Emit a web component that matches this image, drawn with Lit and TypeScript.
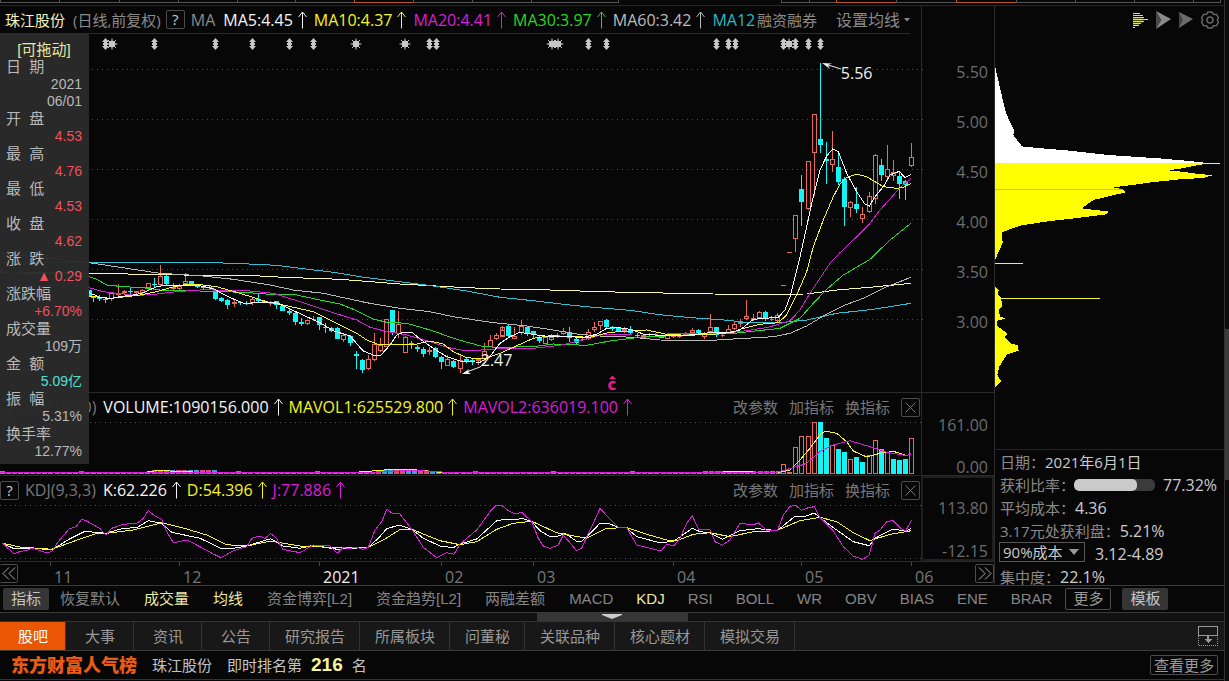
import { LitElement, html, svg, css } from "lit";
import { customElement, state } from "lit/decorators.js";

type Origin = [number, number];

// Every series is stored in segments: an origin in plot units, then samples in thirds of a unit.
const A: Origin = [0, 110];
const B: Origin = [200, 240];
const C: Origin = [500, 240];
const D: Origin = [740, 50];
const K1: Origin = [0, 460];
const K2: Origin = [400, 460];
const K3: Origin = [720, 395];
const P: Origin = [980, 50];

const place = (o: Origin, x: number, y: number) => `${(o[0] + x / 3).toFixed(1)},${(o[1] + y / 3).toFixed(1)}`;
const trace = (...segments: [Origin, string][]) =>
  segments
    .map(([o, s]) => s.split(" ").map((p) => { const [x, y] = p.split(",").map(Number); return place(o, x, y); }).join(" "))
    .join(" ");

const MA_LINES: [string, string][] = [
  ["#f8f8a8", trace([A, "0,486 268,490 600,496"], [B, "100,107 180,108 250,112 420,118 600,132 800,143"], [C, "0,147 150,150 300,155 440,158 640,162"], [D, "0,733 200,732 290,720 400,711 513,700"])],
  ["#2fc0d4", trace([A, "0,459 268,458 600,457"], [B, "100,70 230,76 300,85 400,97 480,110 600,125 700,138 800,153"], [C, "0,172 100,182 200,194 280,202 390,211 480,224 560,232 700,242"], [D, "0,818 120,818 200,810 290,790 400,778 513,760"])],
  ["#b8b8b8", trace([A, "0,430 268,458 380,475 480,490 600,497"], [B, "100,118 210,135 280,150 370,160 500,188 600,205 690,215 760,230 880,248"], [C, "0,250 80,258 160,270 230,282 300,288 400,292 480,300 600,303 700,297"], [D, "0,866 100,860 150,850 200,828 250,798 310,767 370,745 440,710 513,682"])],
  ["#24d824", trace([A, "0,485 200,495 268,500 290,508 320,525 370,530 430,533 480,540 600,543"], [B, "130,157 210,163 280,163 350,178 420,192 470,212 520,237 560,247 620,250 690,270 770,298 850,320"], [C, "0,322 100,320 160,312 260,316 330,303 420,292 560,285 700,280"], [D, "0,848 120,835 180,805 220,760 260,718 310,675 390,628 450,570 513,520"])],
  ["#d81ed8", trace([A, "0,480 200,515 268,533 310,545 350,550 420,556 470,552 530,545 600,540"], [B, "0,148 80,152 150,153 220,160 300,185 380,212 470,240 510,262 550,272 620,285 680,302 740,322 800,333"], [C, "0,326 100,325 180,316 250,300 310,283 400,282 500,282 640,280 720,275"], [D, "0,845 85,832 150,812 180,780 210,730 240,685 270,640 300,608 350,560 390,520 420,480 480,413 513,385"])],
  ["#f8f828", trace([A, "268,558 330,565 380,560 420,555 470,545 510,533 550,525 600,524"], [B, "50,140 120,160 200,185 250,195 340,215 400,245 470,280 500,300 540,315 600,312 650,312 690,303 730,312 760,335 800,353 850,357"], [C, "0,340 40,322 100,295 150,287 270,292 330,277 440,270 500,283 560,286 640,283 700,277"], [D, "0,838 60,823 115,818 140,795 170,735 200,665 220,590 250,510 280,440 300,402 320,382 350,373 380,380 430,410 470,415 490,412 513,400"])],
  ["#fafafa", trace([A, "268,548 300,562 330,566 360,560 400,555 430,548 470,530 500,525 540,527 600,527"], [B, "40,146 80,168 130,190 180,188 230,188 270,207 320,230 360,248 400,272 450,288 465,305 490,333 520,345 543,345 570,315 590,285 610,277 636,277 660,297 700,325 740,350 780,363 840,367 870,350"], [C, "0,310 30,290 60,277 110,285 150,290 200,290 250,292 290,283 320,265 350,262 390,268 430,282 500,288 560,286 620,279 690,277"], [D, "0,840 40,808 115,802 135,780 150,740 180,620 200,530 215,460 240,360 260,318 278,297 295,305 320,370 350,425 375,463 388,468 405,440 430,410 450,375 478,364 495,383 513,373"])],
];

// One candle: centre, high, body top, body bottom, low, u(p) or d(own).
const CANDLES: [Origin, string][] = [
  [A, "268 540 540 560 560 d|280 557 557 565 575 d|298 556 560 567 572 d|316 562 568 571 580 d|334 550 550 568 572 u|355 522 548 555 558 u|373 540 543 550 554 u|391 532 544 547 556 d|409 543 543 550 552 u|427 537 540 548 552 u|445 520 520 535 540 u|463 503 522 526 535 d|481 465 498 525 528 u|499 490 498 523 528 d|520 520 530 537 540 u|538 522 528 536 545 u|556 490 514 522 526 u|574 512 514 524 526 d|592 522 525 530 534 d"],
  [B, "10 137 137 143 148 d|28 138 140 143 150 d|46 150 150 177 180 d|64 170 174 182 185 d|82 178 181 194 206 d|103 180 186 193 200 u|121 182 187 190 194 d|139 184 188 191 194 d|157 172 178 190 196 u|175 158 176 183 186 d|193 180 183 187 190 d|212 184 188 191 198 u|230 184 184 195 207 d|247 196 198 212 214 d|268 208 212 218 224 d|286 216 218 245 255 d|304 235 247 251 258 d|322 240 240 252 255 u|340 228 236 241 244 u|358 230 232 255 270 d|376 250 260 264 278 d|394 262 265 273 276 d|412 260 265 297 298 d|430 278 285 300 306 u|451 285 288 310 318 d|469 332 341 349 388 d|487 358 361 390 398 d|505 345 358 386 390 u|523 280 312 360 362 u|541 295 316 332 335 u|559 238 238 320 322 u|577 210 210 275 285 d|595 212 253 282 295 u|616 288 292 338 340 u|634 302 310 316 326 d|652 314 322 326 335 d|670 322 327 342 350 d|688 322 329 336 344 u|706 320 323 350 353 d|724 348 352 366 386 d|742 345 356 377 378 u|760 360 362 380 384 d|781 342 360 388 398 u|799 350 356 366 368 d|817 356 360 364 376 d|835 354 358 362 374 u|853 308 332 358 362 u|871 285 300 320 322 u|889 280 284 298 300 u|907 258 270 288 290 u"],
  [C, "7 258 262 290 292 u|25 254 258 288 290 d|43 262 288 296 298 u|64 240 258 278 285 u|82 260 262 282 288 d|100 272 274 282 296 d|118 286 290 302 308 d|137 288 292 311 312 u|155 282 292 301 304 u|173 280 284 292 295 u|190 264 272 283 285 u|209 262 275 293 305 d|229 294 297 308 312 d|247 288 296 299 304 u|265 266 275 298 300 u|283 246 262 270 275 u|301 242 244 258 270 u|319 236 240 262 264 d|337 258 262 268 272 d|356 262 265 272 275 d|373 262 267 274 278 u|391 258 268 280 284 d|411 278 284 288 295 d|430 282 286 292 297 u|448 278 282 286 290 u|466 278 282 286 290 u|484 284 288 293 295 d|502 280 285 296 298 u|520 280 285 292 294 u|538 278 285 291 293 u|556 276 280 284 288 u|577 265 271 280 286 u|595 266 270 280 282 d|613 276 283 290 297 u|631 223 262 275 278 u|649 260 262 284 292 d|667 275 284 287 290 u|685 255 267 278 280 u|703 247 252 268 270 u"],
  [D, "1 808 814 822 832 u|19 750 798 808 811 u|40 792 804 811 814 u|58 784 786 805 808 u|76 782 786 808 812 d|94 798 806 811 812 u|112 790 796 813 816 u|130 705 705 707 707 u|148 606 606 608 608 u|166 496 496 568 605 u|184 375 418 455 527 d|205 332 332 478 480 u|223 193 193 310 438 u|241 40 268 284 308 d|260 277 328 334 402 d|277 243 328 346 367 u|295 305 352 395 405 d|313 380 388 472 527 d|331 452 455 475 500 u|349 412 462 478 490 d|367 470 493 506 518 u|388 427 438 487 490 u|406 312 314 448 462 u|424 328 345 374 392 d|442 285 358 380 392 u|460 330 366 378 392 u|478 366 378 403 446 d|496 390 394 406 450 d|515 279 322 349 350 u"],
];

const UP = "#e8695f";
const DOWN = "#14f4f4";

const drawCandles = () =>
  CANDLES.map(([o, rows]) =>
    rows.split("|").map((r) => {
      const p = r.split(" ");
      const x = Math.floor(o[0] + +p[0] / 3);
      const [hi, top, bottom, lo] = p.slice(1, 5).map((v) => Math.round(o[1] + +v / 3));
      const h = Math.max(1, bottom - top);
      if (p[5] === "u" && +p[3] - +p[2] < 3) return svg`<path d="M${x - 2} ${top + 0.5}h5" stroke=${UP} />`;
      return p[5] === "u"
        ? svg`<path d="M${x + 0.5} ${hi}V${top}M${x + 0.5} ${bottom}V${lo}" stroke=${UP} /><path d="M${x - 1.5} ${top + 0.5}h4v${Math.max(0, h - 1)}h-4z" fill="none" stroke=${UP} />`
        : svg`<path d="M${x + 0.5} ${hi}V${lo}" stroke=${DOWN} /><rect x=${x - 2} y=${top} width="5" height=${h} fill=${DOWN} />`;
    })
  );

const VOLUMES =
  "190 208 u|208 230 u|226 156 u|244 124 u|265 124 u|283 82 u|301 82 d|319 130 d|337 150 u|355 162 d|373 171 d|391 193 u|409 186 d|427 201 d|448 180 u|466 136 u|484 163 d|502 170 u|520 192 d|538 195 d|556 192 d|574 130 u";

const QUIET_VOLUME = Array.from({ length: 129 }, (_, i) => {
  const x = i * 6.06;
  const busy = (x > 150 && x < 215) || (x > 370 && x < 430) ? 2 : x > 700 || (i * 7) % 13 === 0 ? 1 : 0;
  return { x: Math.round(x), h: 2 + busy, up: (i * 5 + Math.floor(i / 4)) % 3 !== 0 };
});

const MAVOL = [
  ["#f8f828", trace([K1, "0,38 440,36 480,31 540,35 660,38 1050,38 1180,28 1198,28"], [K2, "40,29 120,37 700,39 900,38"], [K3, "0,231 60,229 100,231 180,231 210,226 240,195 270,160 300,120 315,108 350,115 380,140 400,168 440,186 480,175 520,169 555,180"])],
  ["#d81ed8", trace([K1, "0,39 1100,38 1198,33"], [K2, "60,32 160,38 900,39"], [K3, "0,231 170,232 220,218 260,205 300,170 340,150 390,137 450,155 500,172 560,182 574,176"])],
];

const KDJ = [
  ["#fafafa", trace([K1, "8,250 42,266 97,264 155,270 207,238 255,214 318,220 370,205 410,203 445,182 485,190 515,217 600,235 663,265 700,265 740,258 812,236 850,258 900,265 940,256 1012,268 1105,262 1135,235 1160,206 1198,195"], [K2, "35,208 70,235 125,260 162,262 180,252 230,237 290,182 315,178 345,180 365,175 395,185 420,212 450,230 475,228 495,220 530,244 545,244 560,230 600,190 625,190 655,202 680,204 710,230 783,249 822,243 877,205 900,215 930,218 967,238 1020,212 1075,206 1133,212"], [K3, "174,405 226,363 250,366 283,354 300,368 350,405 400,440 448,452 465,430 518,402 557,408 574,400"])],
  ["#f8f828", trace([K1, "8,250 60,261 155,268 240,237 290,220 320,220 400,210 485,188 560,207 620,225 680,254 740,258 812,243 900,258 1012,263 1105,262 1150,240 1198,210"], [K2, "35,208 120,242 180,254 230,245 290,208 340,190 395,184 470,218 560,235 620,205 680,203 740,223 800,240 830,242 880,223 930,218 990,230 1060,215 1133,212"], [K3, "174,405 240,377 300,367 350,380 400,413 450,437 510,418 574,407"])],
  ["#d81ed8", trace([K1, "8,250 42,282 60,274 80,272 97,264 137,278 155,275 175,245 207,207 228,200 245,178 262,184 300,206 318,225 335,205 370,193 410,190 430,175 445,152 465,168 485,178 500,215 520,248 560,240 600,260 640,282 663,293 700,272 740,260 755,235 780,228 795,235 812,221 830,235 848,268 900,278 940,255 990,258 1012,279 1030,262 1045,266 1070,262 1090,268 1105,262 1125,210 1145,185 1160,148 1180,162 1198,160"], [K2, "35,208 70,262 110,293 140,278 162,283 180,252 230,210 270,155 288,136 305,136 325,152 345,162 365,157 395,185 415,235 430,258 450,265 475,255 490,225 530,272 545,265 560,230 580,190 600,145 625,172 655,202 680,203 710,255 740,262 783,273 800,253 822,257 840,235 860,190 877,167 895,207 930,210 945,245 967,256 990,240 1020,190 1060,195 1075,188 1100,212 1133,210"], [K3, "174,403 190,360 208,336 226,330 244,346 265,338 283,335 300,368 340,408 370,455 400,483 427,493 448,480 465,415 480,405 500,380 518,376 540,398 557,408 574,376"])],
];

const CHIPS_LOSS = trace([P, "45,48 58,105 78,190 102,240 100,255 125,288 130,290 270,302 385,315 535,325 630,333 680,339 45,339"]);
const CHIPS_GAIN = trace([P, "45,339 690,339 640,348 600,356 563,361 605,365 640,370 698,376 670,384 600,388 515,397 480,402 400,412 430,418 438,427 390,438 340,450 305,475 388,485 380,493 300,503 195,515 120,527 65,547 68,578 45,630"]);
const CHIPS_LOW = trace([P, "45,710 56,720 54,735 64,745 66,770 56,778 60,800 78,805 52,812 52,828 84,852 74,860 92,880 113,886 116,902 80,914 58,950 52,975 63,993 45,1014"]);

const STARS = [112, 356, 405, 552, 558, 789];
const SPLITS = [105, 154, 215, 252, 289, 313, 429, 436, 588, 606, 716, 728, 735, 783, 795, 808, 820];

const TOP_CELLS: [number, string][] = [
  [59, ""], [60, ""], [59, ""], [59, ""], [59, ""], [59, ""], [59, "hot"], [59, ""], [59, ""], [88, "last"],
  [164, "void"], [27, ""], [27, ""], [60, "hot"], [60, ""], [60, "hot"], [59, ""], [59, ""], [59, ""], [27, "last"], [2, "void"],
];

const MONTHS: [string, number][] = [["11", 129], ["12", 140], ["2021", 122], ["02", 92], ["03", 140], ["04", 128], ["05", 110], ["06", 83]];

const QUOTE: [string, string, string][] = [
  ["开  盘", "4.53", "red"], ["最  高", "4.76", "red"], ["最  低", "4.53", "red"], ["收  盘", "4.62", "red"],
  ["涨  跌", "▲ 0.29", "red"], ["涨跌幅", "+6.70%", "red"], ["成交量", "109万", ""], ["金  额", "5.09亿", "teal"],
  ["振  幅", "5.31%", ""], ["换手率", "12.77%", ""],
];

const INDICATORS = ["恢复默认", "成交量", "均线", "资金博弈[L2]", "资金趋势[L2]", "两融差额", "MACD", "KDJ", "RSI", "BOLL", "WR", "OBV", "BIAS", "ENE", "BRAR"];
const TABS = ["股吧", "大事", "资讯", "公告", "研究报告", "所属板块", "问董秘", "关联品种", "核心题材", "模拟交易"];

const upArrow = () => html`<svg class="up" width="10" height="18" viewBox="0 0 10 18" fill="none" stroke="currentColor" aria-hidden="true"><path d="M5.5 17.5V1M1.500 6L5.500 1L9.500 6" /></svg>`;
const closeIcon = () => html`<svg width="11" height="11" viewBox="0 0 11 11" fill="none" stroke="currentColor" aria-hidden="true"><path d="M.5 .5l10 10M10.5 .5l-10 10" /></svg>`;
const dots = (y: number, from = 0) => svg`<path class="dots" d="M${from} ${y + 0.5}H921" />`;

@customElement("app-root")
export class AppRoot extends LitElement {
  @state() private tab = "股吧";
  @state() private active = ["成交量", "均线", "KDJ"];

  static styles = css`
    :host { display: block; background: #070707; color: #8a8a8a; font: 15px/20px "Open Sans", "Noto Sans", "Noto Sans CJK SC", sans-serif; }
    * { box-sizing: border-box; }
    button, select { font: inherit; color: inherit; background: none; border: 0; margin: 0; padding: 0; cursor: pointer; }
    svg { display: block; flex: none; }
    .app { display: flex; min-height: 100vh; background: #070707; }
    .page { flex: 1; min-width: 0; display: flex; flex-direction: column; }
    .strip { display: flex; height: 6px; border-bottom: 1px solid #262626; }
    .cell { height: 3px; min-width: 0; border-left: 1px solid #555; border-bottom: 1px solid #555; }
    .cell.hot { border-color: #b85a20; }
    .cell.last { border-right: 1px solid #555; }
    .cell.void { border-color: transparent; }

    .work { flex: 1; display: flex; border-bottom: 1px solid #3a3a3a; min-height: 0; }
    .charts { flex: 1; min-width: 0; display: flex; flex-direction: column; position: relative; }
    .row { display: flex; border-bottom: 1px solid #2a2a2a; }
    .row.head-row { border-bottom: 0; }
    .row.price-row { flex: 1; }
    .plot { flex: 1; min-width: 0; position: relative; display: flex; flex-direction: column; }
    .plot > svg { width: 100%; overflow: visible; }
    .price-row .plot > svg { flex: 1; min-height: 358px; }
    .axis { width: 73px; flex: none; border-left: 1px solid #2c2c2c; display: flex; flex-direction: column; align-items: flex-end; padding-right: 6px; font-size: 16px; line-height: 16px; color: #6d6d6d; }
    .axis.price span { flex: 50; display: flex; align-items: center; }
    .axis.price::before { content: ""; flex: 13; }
    .axis.price::after { content: ""; flex: 45; }
    .axis.volume { justify-content: space-between; padding-top: 24px; }
    .axis.kdj { justify-content: space-between; padding-top: 22px; border: 2px solid #202020; padding-right: 4px; }

    .title-bar { height: 28px; margin-right: 11px; padding-left: 5px; display: flex; align-items: center; border-bottom: 1px solid #2c2c2c; white-space: nowrap; }
    .name { color: #f3f3bb; margin-right: 8px; }
    .help { width: 19px; height: 19px; border: 1px solid #4c4c4c; border-radius: 2px; color: #ccc; line-height: 17px; text-align: center; flex: none; }
    .title-bar .help { margin: 0 6px 0 5px; }
    .averages { flex: 1; min-width: 0; overflow: hidden; display: flex; gap: 7px; font-size: 16px; }
    .average-label { margin-right: 1px; }
    .figure { display: flex; align-items: center; gap: 4px; flex: none; font-size: 16px; }
    .margin { margin-right: 19px; flex: none; }
    .setting { display: flex; align-items: center; gap: 4px; font-size: 16px; flex: none; }
    .white { color: #f5f5f5; }
    .yellow { color: #f4f422; }
    .magenta { color: #d81ed8; }
    .green { color: #24d824; }
    .silver { color: #bbb; }
    .cyan { color: #27b9c4; }
    .sub-head { height: 28px; margin-bottom: 1px; display: flex; align-items: center; gap: 6px; padding-right: 1px; white-space: nowrap; }
    .param { color: #777; font-size: 16px; margin-right: 1px; }
    .ops { margin-left: auto; display: flex; align-items: center; gap: 11px; color: #777; }
    .close { width: 19px; height: 19px; border: 1px solid #4c4c4c; border-radius: 2px; display: grid; place-items: center; }
    .dots { stroke: #505050; stroke-dasharray: 1 4; fill: none; }
    .mark { position: absolute; color: #eee; font-size: 16px; line-height: 18px; }
    .bonus { color: #f01888; font: bold 15px/14px "DejaVu Sans", sans-serif; }

    .times { display: flex; height: 23px; font-size: 16px; line-height: 16px; position: relative; }
    .lead { flex: 50 1 0; min-width: 0; padding-top: 2px; }
    .month { min-width: 0; padding-top: 7px; text-indent: 4px; color: #777; background: linear-gradient(#444, #444) 0 0 / 1px 4px no-repeat; }
    .month.year { color: #eee; }
    .page-btn { width: 19px; height: 19px; border: 1px solid #4c4c4c; border-radius: 2px; display: grid; place-items: center; color: #aaa; }
    .lead .page-btn { width: 18px; border-left: 0; }
    .page-btn.next { position: absolute; right: 0; top: 2px; }

    .quote { position: absolute; left: 0; top: 28px; width: 89px; padding: 7px 7px 4px 6px; background: rgba(42, 42, 42, 0.97); color: #b9b9b9; font: 15px/17px "Liberation Sans", "Noto Sans CJK SC", sans-serif; }
    .quote p, .quote dl, .quote dd, .quote dt { margin: 0; }
    .quote p { text-align: center; color: #e6e6a0; }
    .quote dt { height: 17px; white-space: pre; }
    .quote dd { height: 18px; line-height: 18px; font-size: 14px; text-align: right; white-space: nowrap; }
    .quote dd.day { height: 17px; }
    .red { color: #f0525c; }
    .teal { color: #4fe0d2; }

    .side { width: 230px; flex: none; border-left: 1px solid #2c2c2c; display: flex; flex-direction: column; }
    .tools { height: 28px; display: flex; align-items: center; justify-content: flex-end; gap: 8px; padding-right: 5px; color: #666; }
    .tools button { display: grid; place-items: center; }
    .side > svg { width: 100%; flex: 1; min-height: 415px; }
    .facts { height: 136px; border-top: 1px solid #242424; padding-left: 5px; white-space: nowrap; }
    .fact { height: 23px; display: flex; align-items: center; font-size: 15px; }
    .fact b { font-weight: 400; color: #ccc; }
    .fact .num { font-size: 16px; }
    .meter { width: 81px; height: 12px; border-radius: 5px; background: #3b3b3b; overflow: hidden; margin: 0 8px 0 -1px; }
    .fill { height: 100%; background: #cacaca; border-radius: 5px; }
    .pick { position: relative; width: 86px; height: 20px; border: 1px solid #555; margin: 0 10px 4px -1px; color: #ccc; display: flex; align-items: center; }
    .pick select { appearance: none; width: 100%; height: 18px; padding-left: 3px; line-height: 18px; }
    .pick svg { position: absolute; right: 5px; top: 6px; pointer-events: none; }

    .indicators { height: 27px; display: flex; align-items: center; gap: 24px; padding-left: 3px; border-bottom: 1px solid #3a3a3a; font: 15px/20px "Liberation Sans", "Noto Sans CJK SC", sans-serif; color: #858585; white-space: nowrap; }
    .indicators .latin { margin-right: -1px; }
    .indicators .on { color: #ececa0; }
    .chip { width: 46px; height: 22px; line-height: 20px; border-radius: 2px; background: #353535; color: #c4c4c4; }
    .chip.first { margin-right: -13px; }
    .chip.line { background: none; border: 1px solid #4c4c4c; color: #999; margin: 0 -13px 0 -10px; }
    .splitter { height: 9px; display: flex; justify-content: center; background: #111; border-bottom: 1px solid #333; }
    .grip { width: 151px; background: #363636; display: grid; justify-items: center; padding-top: 1px; }
    .tabs { height: 29px; display: flex; background: #181818; border-bottom: 1px solid #3a3a3a; }
    .tab { min-width: 68px; padding: 0 14px 0 15px; border-right: 1px solid #333; color: #999; white-space: nowrap; }
    .tab:first-child { min-width: 66px; }
    .tab.on { background: #eb5604; color: #fff; }
    .dock { margin: 0 6px 0 auto; color: #999; display: grid; place-items: center; }
    .rank { height: 29px; display: flex; align-items: center; border-bottom: 1px solid #333; margin-bottom: 1px; padding: 0 6px 0 11px; color: #c4c4c4; white-space: nowrap; }
    .brand { color: #ec5b12; font-size: 18px; font-weight: 900; margin-right: 15px; }
    .rank .who { margin-right: 15px; }
    .place { color: #f5f59a; font: bold 19px/20px "Liberation Sans", sans-serif; margin: 0 9px; }
    .more { margin-left: auto; width: 68px; height: 20px; line-height: 18px; border: 1px solid #4c4c4c; border-radius: 2px; color: #999; }
    .scroll { width: 5px; flex: none; border-left: 1px solid #333; background: #0c0c0c; display: flex; flex-direction: column; }
    .scroll::before { content: ""; flex: 329; }
    .scroll::after { content: ""; flex: 201; }
    .thumb { flex: 151; background: #3b3b3b; }
  `;

  private toggle(name: string) {
    this.active = this.active.includes(name) ? this.active.filter((n) => n !== name) : [...this.active, name];
  }

  private figure(text: string, tone: string) {
    return html`<span class="figure ${tone}">${text}${upArrow()}</span>`;
  }

  private ops() {
    return html`<div class="ops"><button>改参数</button><button>加指标</button><button>换指标</button><button class="close" aria-label="关闭">${closeIcon()}</button></div>`;
  }

  private priceChart() {
    return html`<svg viewBox="0 34 921 358" preserveAspectRatio="none" shape-rendering="crispEdges" aria-hidden="true">
      ${[69, 119, 169, 219, 269, 319].map((y) => svg`<path class="dots" d="M2 ${y + 0.5}H925" />`)}
      ${STARS.map((x) => svg`<g stroke="#c8c8c8" fill="#c8c8c8" shape-rendering="auto"><path d="M${x} 38.5v11M${x - 5.5} 44h11M${x - 4} 40l8 8M${x + 4} 40l-8 8" /><circle cx=${x} cy="44" r="3" /></g>`)}
      ${SPLITS.map((x) => svg`<path shape-rendering="auto" fill="#c8c8c8" d="M${x + 0.5} 38l3.5 4h-2v1h1v2h-1v1h2l-3.5 4l-3.5-4h2v-1h-1v-2h1v-1h-2z" />`)}
      ${drawCandles()}
      ${MA_LINES.map(([c, pts]) => svg`<polyline points=${pts} fill="none" stroke=${c} />`)}
      <path d="M841 69L825 64M464 373L480 367L486 362M463 373" stroke="#eee" fill="none" shape-rendering="auto" />
      <path d="M822 63L832 63.5L828 65L830 69zM462 374L469 369L468 372L471 374z" fill="#eee" shape-rendering="auto" />
      <path d="M609 379L612.500 375.500L616 379z" fill="#f01888" shape-rendering="auto" />
    </svg>`;
  }

  render() {
    return html`<div class="app">
      <div class="page">
        <div class="strip">${TOP_CELLS.map(([w, kind]) => html`<div class="cell ${kind}" style="flex:${w} 1 0"></div>`)}</div>
        <div class="work">
          <main class="charts">
            <div class="row head-row">
              <div class="plot">
                <div class="title-bar">
                  <span class="name">珠江股份</span><span>(日线,前复权)</span>
                  <button class="help" aria-label="帮助">?</button>
                  <div class="averages">
                    <span class="average-label">MA</span>
                    ${this.figure("MA5:4.45", "white")}${this.figure("MA10:4.37", "yellow")}${this.figure("MA20:4.41", "magenta")}
                    ${this.figure("MA30:3.97", "green")}${this.figure("MA60:3.42", "silver")}<span class="figure cyan">MA12</span>
                  </div>
                  <button class="margin">融资融券</button>
                  <button class="setting">设置均线<svg width="6" height="4" viewBox="0 0 6 4" fill="currentColor" aria-hidden="true"><path d="M0 0h6L3 3.500z" /></svg></button>
                </div>
              </div>
              <div class="axis"></div>
            </div>

            <div class="row price-row">
              <div class="plot">
                ${this.priceChart()}
                <span class="mark" style="left:91.300%;top:8.400%">5.56</span>
                <span class="mark" style="left:52.200%;top:88.600%">2.47</span>
                <span class="mark bonus" style="left:65.950%;top:96%">c</span>
              </div>
              <div class="axis price">${["5.50", "5.00", "4.50", "4.00", "3.50", "3.00"].map((v) => html`<span>${v}</span>`)}</div>
            </div>

            <div class="row">
              <div class="plot">
                <div class="sub-head">
                  <button class="help" aria-label="帮助">?</button><span class="param">VOL(5,10)</span>
                  ${this.figure("VOLUME:1090156.000", "white")}${this.figure("MAVOL1:625529.800", "yellow")}${this.figure("MAVOL2:636019.100", "magenta")}
                  ${this.ops()}
                </div>
                <svg height="53" viewBox="0 422 921 53" preserveAspectRatio="none" shape-rendering="crispEdges" aria-hidden="true">
                  ${dots(422)}
                  ${QUIET_VOLUME.map((b) => svg`<rect x=${b.x} y=${474 - b.h} width="5" height=${b.h} fill=${b.up ? "#e04a78" : "#3ea0d8"} />`)}
                  ${VOLUMES.split("|").map((r) => {
                    const [x, y, t] = r.split(" ");
                    const cx = Math.floor(720 + +x / 3);
                    const top = Math.round(395 + +y / 3);
                    return t === "u"
                      ? svg`<rect x=${cx - 1.5} y=${top + 0.5} width="4" height=${473 - top} fill="none" stroke=${UP} />`
                      : svg`<rect x=${cx - 2} y=${top} width="5" height=${474 - top} fill=${DOWN} />`;
                  })}
                  ${MAVOL.map(([c, pts]) => svg`<polyline points=${pts} fill="none" stroke=${c} />`)}
                </svg>
              </div>
              <div class="axis volume"><span>161.00</span><span>0.00</span></div>
            </div>

            <div class="row">
              <div class="plot">
                <div class="sub-head">
                  <button class="help" aria-label="帮助">?</button><span class="param">KDJ(9,3,3)</span>
                  ${this.figure("K:62.226", "white")}${this.figure("D:54.396", "yellow")}${this.figure("J:77.886", "magenta")}
                  ${this.ops()}
                </div>
                <svg height="56" viewBox="0 505 921 56" preserveAspectRatio="none" shape-rendering="crispEdges" aria-hidden="true">
                  ${dots(505)}${dots(558)}
                  ${KDJ.map(([c, pts]) => svg`<polyline points=${pts} fill="none" stroke=${c} />`)}
                </svg>
              </div>
              <div class="axis kdj"><span>113.80</span><span>-12.15</span></div>
            </div>

            <div class="times">
              <div class="lead"><button class="page-btn" aria-label="上一页"><svg width="14" height="13" viewBox="0 0 14 13" fill="none" stroke="currentColor"><path d="M7 .5L1 6.500L7 12.500M13 .5L7 6.500L13 12.500" /></svg></button></div>
              ${MONTHS.map(([m, w]) => html`<div class="month ${m === "2021" ? "year" : ""}" style="flex:${w} 1 0">${m}</div>`)}
              <button class="page-btn next" aria-label="下一页"><svg width="14" height="13" viewBox="0 0 14 13" fill="none" stroke="currentColor"><path d="M1 .5L7 6.500L1 12.500M7 .5L13 6.500L7 12.500" /></svg></button>
            </div>

            <aside class="quote">
              <p>[可拖动]</p>
              <dl><dt>日  期</dt><dd class="day">2021</dd><dd>06/01</dd>${QUOTE.map(([k, v, tone]) => html`<dt>${k}</dt><dd class=${tone}>${v}</dd>`)}</dl>
            </aside>
          </main>

          <aside class="side">
            <div class="tools">
              <button aria-label="筹码分布"><svg width="15" height="16" viewBox="0 0 15 16" shape-rendering="crispEdges"><path d="M0 5h11v11H0z" fill="none" /><path d="M0 6h10v5H0zM0 11h6v3H0z" fill="#4c4c00" /><path d="M0 1h7v1H0zM0 3h10v1H0z" fill="#d0d0d0" /><path d="M0 5h11v1H0zM0 7h15v1H0zM0 9h11v1H0zM0 11h8v1H0zM0 13h6v1H0zM0 15h2v1H0z" fill="#f0f000" /></svg></button>
              <button aria-label="播放"><svg width="15" height="18" viewBox="0 0 15 18"><path d="M0 0L15 8L0 18L5 9z" fill="#8a8a8a" /><path d="M0 0L5 9L0 18z" fill="#4a4a4a" /></svg></button>
              <button aria-label="前进"><svg width="14" height="18" viewBox="0 0 14 18"><path d="M0 1L14 8L0 17z" fill="#6c6c6c" /><path d="M0 1L4 9L0 17z" fill="#444" /></svg></button>
              <button aria-label="设置"><svg width="18" height="18" viewBox="0 0 18 18" fill="none" stroke="currentColor" stroke-width="1.500"><path d="M7 1h4l1.500 2.200l3 .3l2 3.500l-1.200 2l1.200 2l-2 3.500l-3 .3L11 17H7l-1.500-2.200l-3-.3l-2-3.500L1.700 9L.5 7l2-3.500l3-.3z" /><circle cx="9" cy="9" r="3" /></svg></button>
            </div>
            <svg viewBox="995 34 229 415" preserveAspectRatio="none" shape-rendering="crispEdges" aria-hidden="true">
              <polygon points=${CHIPS_LOSS} fill="#fff" />
              <polygon points=${CHIPS_GAIN} fill="#ff0" />
              <polygon points=${CHIPS_LOW} fill="#ff0" />
              <path d="M995 163.500H1220M995 263.500H1023M995 298.500H1100" stroke="#f5f53c" />
              <path d="M995 189.500H1123" stroke="#3cf0c8" />
            </svg>
            <div class="facts">
              <div class="fact">日期：<b>2021年6月1日</b></div>
              <div class="fact">获利比率：<div class="meter" role="img" aria-label="获利比率 77.32%"><div class="fill" style="width:77.320%"></div></div><b class="num">77.32%</b></div>
              <div class="fact">平均成本：<b class="num">4.36</b></div>
              <div class="fact">3.17元处获利盘：<b class="num">5.21%</b></div>
              <div class="fact"><label class="pick"><select aria-label="成本区间"><option>90%成本</option><option>70%成本</option></select><svg width="10" height="6" viewBox="0 0 10 6" fill="#999"><path d="M0 0h10L5 6z" /></svg></label><b class="num">3.12-4.89</b></div>
              <div class="fact">集中度：<b class="num">22.1%</b></div>
            </div>
          </aside>
        </div>

        <nav class="indicators" aria-label="指标">
          <button class="chip first">指标</button>
          ${INDICATORS.map((n) => html`<button class="${/^[A-Z]+$/.test(n) ? "latin" : ""} ${this.active.includes(n) ? "on" : ""}" @click=${() => this.toggle(n)}>${n}</button>`)}
          <button class="chip line">更多</button>
          <button class="chip">模板</button>
        </nav>
        <div class="splitter"><div class="grip"><svg width="20" height="5" viewBox="0 0 20 5"><path d="M0 0h20v1L10 5L0 1z" fill="#ccc" /></svg></div></div>
        <nav class="tabs">
          ${TABS.map((t) => html`<button class="tab ${t === this.tab ? "on" : ""}" @click=${() => (this.tab = t)}>${t}</button>`)}
          <button class="dock" aria-label="停靠"><svg width="20" height="20" viewBox="0 0 20 20" fill="none" stroke="currentColor" shape-rendering="crispEdges"><path d="M.5 9.500V.5h19v9z" /><path d="M.5 10v9.500h19V10" stroke-dasharray="1 1" /><path d="M10 10v4" stroke-width="2" /><path d="M6 13h8l-4 4z" fill="currentColor" stroke="none" /></svg></button>
        </nav>
        <div class="rank">
          <span class="brand">东方财富人气榜</span><span class="who">珠江股份</span><span>即时排名第</span><span class="place">216</span><span>名</span>
          <button class="more">查看更多</button>
        </div>
      </div>
      <div class="scroll"><div class="thumb"></div></div>
    </div>`;
  }
}
